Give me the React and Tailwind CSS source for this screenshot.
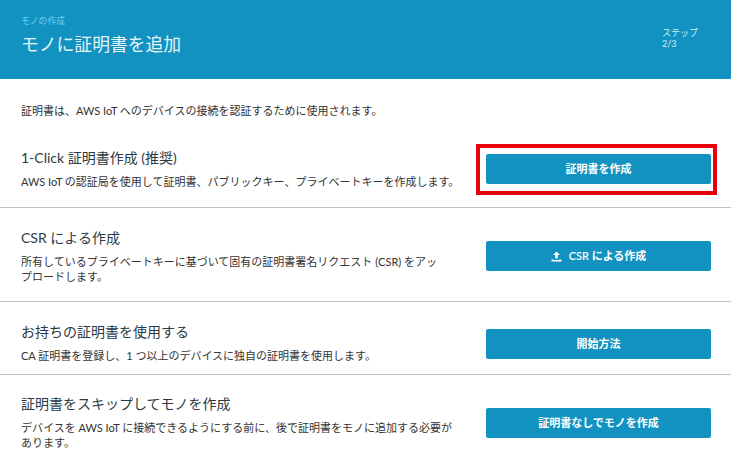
import React from 'react';

const FONT = "font-['Lato','Noto_Sans_CJK_JP',sans-serif]";

// Upload glyph used in the CSR button
const UploadIcon = () => (
  <svg width="11" height="11" viewBox="0 0 11 11" fill="white">
    <path d="M5.5 0.5 L9 4 H6.8 V7.6 H4.2 V4 H2 Z" />
    <path d="M0.5 8.6 H3 V9 H8 V8.6 H10.5 V10.6 H0.5 Z" />
  </svg>
);

const rows = [
  {
    title: '1-Click 証明書作成 (推奨)',
    desc: 'AWS IoT の認証局を使用して証明書、パブリックキー、プライベートキーを作成します。',
    button: '証明書を作成',
    box: 'pt-[20px] pb-[18px]',
    nudge: 'mt-[1px]',
    highlight: true,
  },
  {
    title: 'CSR による作成',
    desc: (
      <>
        所有しているプライベートキーに基づいて固有の証明書署名リクエスト (CSR) をアッ
        <br />
        プロードします。
      </>
    ),
    button: 'CSR による作成',
    box: 'pt-[20px] pb-[17px]',
    icon: true,
  },
  {
    title: 'お持ちの証明書を使用する',
    desc: 'CA 証明書を登録し、1 つ以上のデバイスに独自の証明書を使用します。',
    button: '開始方法',
    box: 'pt-[20px] pb-[11px]',
    nudge: 'mt-[3px]',
  },
  {
    title: '証明書をスキップしてモノを作成',
    desc: 'デバイスを AWS IoT に接続できるようにする前に、後で証明書をモノに追加する必要があります。',
    button: '証明書なしでモノを作成',
    box: 'pt-[19px] pb-[20px]',
    nudge: 'mt-[2px]',
  },
];

const Row = ({ row, last }) => (
  <div className={`flex items-center justify-between pl-[21px] pr-5 ${row.box} ${last ? '' : 'border-b border-[#c4c4c4]'}`}>
    <div className="w-[440px]">
      <h2 className="text-[14px] leading-[20px] text-[#2b3a42] mb-[6px]">{row.title}</h2>
      <p className="text-[11px] leading-[15px] text-[#333]">{row.desc}</p>
    </div>
    <div className={`relative w-[225px] ${row.nudge || ''}`}>
      <button className="w-full h-[30px] bg-[#1192c0] rounded-[2px] text-white text-[11px] font-semibold flex items-center justify-center gap-[7px]">
        {row.icon && <UploadIcon />}
        {row.button}
      </button>
      {/* Red annotation box drawn over the screenshot */}
      {row.highlight && (
        <div className="absolute -left-[10px] -right-[6px] -top-[10px] -bottom-[11px] border-4 border-[#e8000b] pointer-events-none" />
      )}
    </div>
  </div>
);

export default function App() {
  return (
    <div className={`w-[731px] h-[470px] overflow-hidden bg-white ${FONT}`}>
      {/* Header */}
      <div className="h-[79px] bg-[#1192c0] flex justify-between pl-[21px] pr-[33px]">
        <div className="pt-[15px]">
          <div className="text-[8.8px] leading-[12px] text-[#6fcdf0]">モノの作成</div>
          <h1 className="text-[17.8px] leading-[26px] mt-[4px] text-[#e4f3f9]">モノに証明書を追加</h1>
        </div>
        <div className="pt-[27px] w-[36px] text-[9px] leading-[11px] text-[#d8eef7]">
          <div>ステップ</div>
          <div>2/3</div>
        </div>
      </div>

      {/* Intro */}
      <p className="pl-[21px] pt-[24px] pb-[10px] text-[11px] leading-[15px] text-[#333]">
        証明書は、AWS IoT へのデバイスの接続を認証するために使用されます。
      </p>

      {rows.map((row, i) => (
        <Row key={i} row={row} last={i === rows.length - 1} />
      ))}
    </div>
  );
}
